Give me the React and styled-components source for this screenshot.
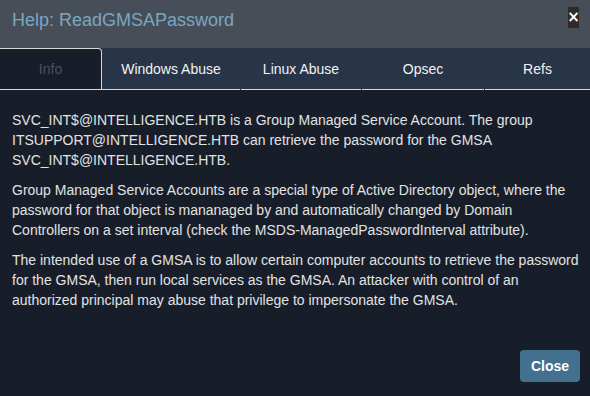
import React from "react";
import styled, { createGlobalStyle } from "styled-components";

const Global = createGlobalStyle`
  html, body { margin: 0; padding: 0; background: #171e2a; }
  body { font-family: "Liberation Sans", Arial, sans-serif; }
`;

const Modal = styled.div`
  width: 590px;
  height: 396px;
  display: flex;
  flex-direction: column;
  background: #171e2a;
  overflow: hidden;
`;

const Header = styled.div`
  height: 48px;
  flex: none;
  background: #484e57;
  display: flex;
  align-items: center;
  justify-content: space-between;
  padding: 0 11px 0 12px;
  box-sizing: border-box;
`;

const Title = styled.h4`
  margin: 0;
  font-size: 18px;
  font-weight: normal;
  color: #7aa6c2;
  line-height: 20px;
  margin-top: -8px;
`;

const CloseX = styled.button`
  width: 11px;
  height: 21px;
  padding: 0;
  border: none;
  background: #2e2a2b;
  color: #fff;
  font-family: "DejaVu Sans", sans-serif;
  font-weight: bold;
  font-size: 15px;
  line-height: 21px;
  margin-top: -14px;
  display: flex;
  align-items: center;
  justify-content: center;
  cursor: pointer;
`;

const TabBar = styled.div`
  height: 42px;
  flex: none;
  background: #283447;
  display: flex;
`;

const Tab = styled.div`
  width: ${(p) => p.$w}px;
  margin-left: ${(p) => p.$gap}px;
  box-sizing: border-box;
  flex: none;
  display: flex;
  align-items: center;
  justify-content: center;
  font-size: 14px;
  color: ${(p) => (p.$active ? "#4a515c" : "#f2f2f2")};
  background: ${(p) => (p.$active ? "#171e2a" : "transparent")};
  border-bottom: 1px solid #d9d9d9;
  border-top: ${(p) => (p.$active ? "1px solid #d9d9d9" : "none")};
  border-right: ${(p) => (p.$active ? "1px solid #d9d9d9" : "none")};
  border-top-right-radius: ${(p) => (p.$active ? "4px" : "0")};
  padding-top: ${(p) => (p.$active ? "0" : "1px")};
`;

const Body = styled.div`
  flex: 1;
  padding: 20px 8px 0 12px;
  color: #e2e2e2;
  font-size: 14px;
  line-height: 20px;
`;

const P = styled.p`
  margin: 0 0 10px 0;
`;

const Footer = styled.div`
  flex: none;
  display: flex;
  justify-content: flex-end;
  padding: 0 10px 14px 0;
`;

const Button = styled.button`
  width: 60px;
  height: 32px;
  border: none;
  border-radius: 4px;
  background: #44708f;
  color: #fff;
  font-family: "Liberation Sans", Arial, sans-serif;
  font-size: 14px;
  font-weight: bold;
  cursor: pointer;
`;

const tabs = [
  { label: "Info", w: 102, gap: 0, active: true },
  { label: "Windows Abuse", w: 138, gap: 0 },
  { label: "Linux Abuse", w: 120, gap: 1 },
  { label: "Opsec", w: 122, gap: 1 },
  { label: "Refs", w: 105, gap: 1 },
];

export default function App() {
  return (
    <>
      <Global />
      <Modal>
        <Header>
          <Title>Help: ReadGMSAPassword</Title>
          <CloseX>×</CloseX>
        </Header>
        <TabBar>
          {tabs.map((t) => (
            <Tab key={t.label} $w={t.w} $gap={t.gap} $active={t.active}>
              {t.label}
            </Tab>
          ))}
        </TabBar>
        <Body>
          <P>
            SVC_INT$@INTELLIGENCE.HTB is a Group Managed Service Account. The group
            ITSUPPORT@INTELLIGENCE.HTB can retrieve the password for the GMSA
            SVC_INT$@INTELLIGENCE.HTB.
          </P>
          <P>
            Group Managed Service Accounts are a special type of Active Directory object, where the
            password for that object is mananaged by and automatically changed by Domain
            Controllers on a set interval (check the MSDS-ManagedPasswordInterval attribute).
          </P>
          <P>
            The intended use of a GMSA is to allow certain computer accounts to retrieve the password
            for the GMSA, then run local services as the GMSA. An attacker with control of an
            authorized principal may abuse that privilege to impersonate the GMSA.
          </P>
        </Body>
        <Footer>
          <Button>Close</Button>
        </Footer>
      </Modal>
    </>
  );
}
